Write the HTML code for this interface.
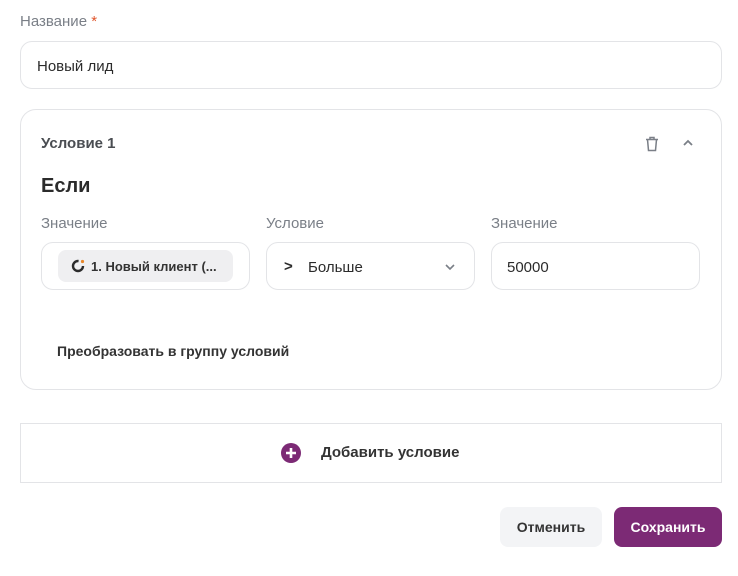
<!DOCTYPE html>
<html><head><meta charset="utf-8"><style>
*{box-sizing:border-box;margin:0;padding:0}
body{width:738px;height:576px;background:#fff;font-family:"Liberation Sans","Noto Sans CJK SC",sans-serif;position:relative;overflow:hidden;color:#2b2b2b}
.a{position:absolute}
.lbl{font-size:15px;color:#7a7f87}
.box{border:1px solid #e3e4e7;border-radius:12px;background:#fff}
</style></head><body>
<div class="a lbl" style="left:20px;top:13px">Название<span style="color:#e0552b"> *</span></div>
<div class="a box" style="left:20px;top:41px;width:702px;height:48px"></div>
<div class="a" style="left:37px;top:58px;font-size:15px">Новый лид</div>

<div class="a" style="left:20px;top:109px;width:702px;height:281px;border:1px solid #e3e4e7;border-radius:16px"></div>
<div class="a" style="left:41px;top:135px;font-size:15px;font-weight:bold;color:#4a4d52">Условие 1</div>
<svg class="a" style="left:645px;top:136px" width="14" height="16" viewBox="0 0 14 16" fill="none" stroke="#7a7f87" stroke-width="1.5"><path d="M1 3.5h12M5 3.5V1.5h4v2M2.5 3.5l1 11h7l1-11"/></svg>
<svg class="a" style="left:682px;top:139px" width="12" height="8" viewBox="0 0 12 8" fill="none" stroke="#7a7f87" stroke-width="1.8"><path d="M2 6l4-4 4 4"/></svg>
<div class="a" style="left:41px;top:175px;font-size:20px;font-weight:bold;color:#2b2b2b">Если</div>
<div class="a lbl" style="left:41px;top:215px">Значение</div>
<div class="a lbl" style="left:266px;top:215px">Условие</div>
<div class="a lbl" style="left:491px;top:215px">Значение</div>
<div class="a box" style="left:41px;top:242px;width:209px;height:48px"></div>
<div class="a" style="left:58px;top:250px;width:175px;height:32px;background:#efeff1;border-radius:8px"></div>
<svg class="a" style="left:71px;top:259px" width="14" height="14" viewBox="0 0 14 14"><circle cx="7" cy="7" r="5" fill="none" stroke="#2b2b2b" stroke-width="2.4" stroke-dasharray="24 8"/><circle cx="11.5" cy="2.5" r="1.6" fill="#e8872b"/></svg>
<div class="a" style="left:91px;top:259px;font-size:13px;font-weight:bold;color:#333">1. Новый клиент (...</div>
<div class="a box" style="left:266px;top:242px;width:209px;height:48px"></div>
<div class="a" style="left:284px;top:258px;font-size:15px;font-weight:bold">&gt;</div>
<div class="a" style="left:308px;top:259px;font-size:15px">Больше</div>
<svg class="a" style="left:444px;top:263px" width="12" height="8" viewBox="0 0 12 8" fill="none" stroke="#7a7f87" stroke-width="1.6"><path d="M2 2l4 4 4-4"/></svg>
<div class="a box" style="left:491px;top:242px;width:209px;height:48px"></div>
<div class="a" style="left:507px;top:259px;font-size:15px">50000</div>
<div class="a" style="left:57px;top:343px;font-size:14px;font-weight:bold;color:#333">Преобразовать в группу условий</div>

<div class="a" style="left:20px;top:423px;width:702px;height:60px;border:1px solid #e3e4e7"></div>
<svg class="a" style="left:281px;top:443px" width="20" height="20" viewBox="0 0 20 20"><circle cx="10" cy="10" r="10" fill="#7c2a75"/><path d="M10 5v10M5 10h10" stroke="#fff" stroke-width="2.6"/></svg>
<div class="a" style="left:321px;top:444px;font-size:15px;font-weight:bold;color:#333">Добавить условие</div>
<div class="a" style="left:500px;top:507px;width:102px;height:40px;background:#f3f4f6;border-radius:8px;font-size:14px;font-weight:bold;line-height:40px;text-align:center;color:#333">Отменить</div>
<div class="a" style="left:614px;top:507px;width:108px;height:40px;background:#7c2a75;border-radius:8px;font-size:14px;font-weight:bold;line-height:40px;text-align:center;color:#fff">Сохранить</div>
</body></html>
